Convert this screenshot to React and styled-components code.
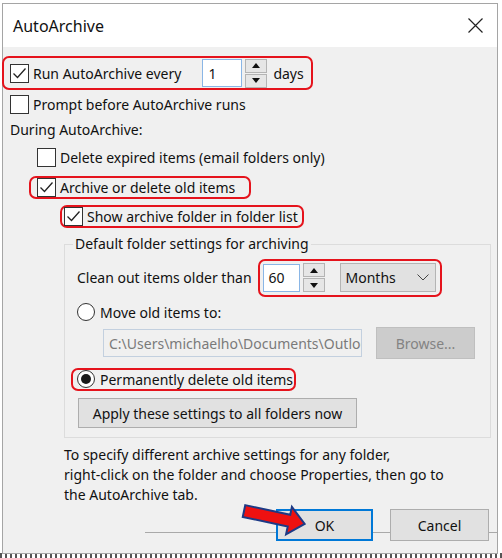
import styled, { createGlobalStyle } from "styled-components";

const GlobalStyle = createGlobalStyle`
  body {
    margin: 0;
    background: #ffffff;
    font-family: "Noto Sans", "Open Sans", sans-serif;
    font-size: 14px;
    color: #111;
  }
`;

const Page = styled.div`
  width: 502px;
  height: 558px;
  padding: 3px 0 0 2px;
  box-sizing: border-box;
  overflow: hidden;
  background: repeating-linear-gradient(90deg, #555 0 2px, #fff 2px 5px) bottom / 100% 5px no-repeat, #fff;
`;

const Window = styled.div`
  position: relative;
  width: 496px;
  height: 551px;
  box-sizing: border-box;
  border: 1px solid #a5a5a5;
  background: #f0f0f0;
  display: flex;
  flex-direction: column;
`;

const TitleBar = styled.div`
  height: 43px;
  flex: none;
  background: #fff;
  display: flex;
  align-items: center;
  justify-content: space-between;
  padding: 0 14px 0 10px;
`;

const Title = styled.span`
  font-size: 16px;
  color: #111;
`;

const Body = styled.div`
  padding: 11px 8px 0 7px;
  display: flex;
  flex-direction: column;
`;

const Row = styled.div`
  display: flex;
  align-items: center;
  height: ${(p) => p.$h || 22}px;
  margin-top: ${(p) => p.$mt || 0}px;
  margin-left: ${(p) => p.$ml || 0}px;
`;

const Highlight = styled.div`
  display: flex;
  align-items: center;
  border: 2px solid #e5131c;
  border-radius: 7px;
  padding: ${(p) => `${p.$t}px ${p.$r}px ${p.$b}px ${p.$l}px`};
  margin: ${(p) => `-${p.$t + 2}px -${p.$r + 2}px -${p.$b + 2}px -${p.$l + 2}px`};
`;

const Box = styled.span`
  width: 19px;
  height: 19px;
  box-sizing: border-box;
  flex: none;
  border: 1px solid #333;
  background: #fff;
  display: flex;
  align-items: center;
  justify-content: center;
`;

const Round = styled.span`
  width: 18px;
  height: 18px;
  box-sizing: border-box;
  flex: none;
  border: 1px solid #333;
  border-radius: 50%;
  background: #fff;
  display: flex;
  align-items: center;
  justify-content: center;

  &::after {
    content: "";
    width: 10px;
    height: 10px;
    border-radius: 50%;
    background: #1a1a1a;
    display: ${(p) => (p.$on ? "block" : "none")};
  }
`;

const Label = styled.span`
  margin-left: ${(p) => p.$gap ?? 4}px;
  white-space: nowrap;
`;

const NumField = styled.div`
  width: ${(p) => p.$w}px;
  height: 28px;
  box-sizing: border-box;
  border: 1px solid #8ab6e6;
  background: #fff;
  padding-left: 5px;
  display: flex;
  align-items: center;
  margin-left: ${(p) => p.$ml}px;
`;

const Spinner = styled.div`
  display: flex;
  flex-direction: column;
  gap: 1px;
  margin-left: 3px;
`;

const SpinBtn = styled.div`
  width: 22px;
  height: 14px;
  box-sizing: border-box;
  border: 1px solid #b4b4b4;
  background: #e6e6e6;
  display: flex;
  align-items: center;
  justify-content: center;

  &::after {
    content: "";
    border-left: 4px solid transparent;
    border-right: 4px solid transparent;
    ${(p) => (p.$up ? "border-bottom: 5px solid #111;" : "border-top: 5px solid #111;")}
  }
`;

const Combo = styled.div`
  width: 96px;
  height: 29px;
  box-sizing: border-box;
  margin-left: 15px;
  border: 1px solid #b4b4b4;
  background: #e1e1e1;
  display: flex;
  align-items: center;
  justify-content: space-between;
  padding: 0 6px 0 5px;
`;

const Group = styled.fieldset`
  margin: 7px 0 0 54px;
  width: 427px;
  box-sizing: border-box;
  border: 1px solid #dcdcdc;
  padding: 0 0 9px 12px;
  min-width: 0;
`;

const Legend = styled.legend`
  margin-left: -4px;
  padding: 0 2px;
  line-height: 20px;
`;

const PathField = styled.div`
  width: 259px;
  height: 28px;
  box-sizing: border-box;
  margin-left: 26px;
  border: 1px solid #c3d0df;
  background: #f0f0f0;
  color: #7a7a7a;
  padding-left: 5px;
  display: flex;
  align-items: center;
  white-space: nowrap;
  overflow: hidden;
`;

const Button = styled.div`
  width: ${(p) => p.$w}px;
  height: ${(p) => p.$h || 32}px;
  box-sizing: border-box;
  flex: none;
  margin-left: ${(p) => p.$ml || 0}px;
  border: ${(p) => (p.$primary ? "2px solid #0078d7" : p.$disabled ? "1px solid #bfbfbf" : "1px solid #adadad")};
  background: ${(p) => (p.$disabled ? "#cccccc" : "#e1e1e1")};
  color: ${(p) => (p.$disabled ? "#838383" : "#111")};
  display: flex;
  align-items: center;
  justify-content: center;
  white-space: nowrap;
  position: relative;
  z-index: 1;
`;

const Note = styled.p`
  margin: 7px 0 0 54px;
  line-height: 20px;
`;

const Footer = styled.div`
  position: relative;
  display: flex;
  justify-content: flex-end;
  gap: 17px;
  margin-top: 4px;

  &::before {
    content: "";
    position: absolute;
    left: 135px;
    right: -8px;
    top: 23px;
    border-top: 1px solid #a9a9a9;
  }
`;

const Arrow = styled.svg`
  position: absolute;
  left: 233px;
  top: 493px;
  z-index: 2;
  overflow: visible;
`;

function CheckBox({ checked }) {
  return (
    <Box>
      {checked && (
        <svg width="15" height="15" viewBox="0 0 15 15">
          <path d="M1.5 7.5 L5.5 11.5 L13.5 2.5" fill="none" stroke="#222" strokeWidth="1.3" />
        </svg>
      )}
    </Box>
  );
}

function Spin() {
  return (
    <Spinner>
      <SpinBtn $up />
      <SpinBtn />
    </Spinner>
  );
}

export default function App() {
  return (
    <Page>
      <GlobalStyle />
      <Window>
        <TitleBar>
          <Title>AutoArchive</Title>
          <svg width="15" height="15" viewBox="0 0 15 15">
            <path d="M0.5 0.5 L14.5 14.5 M14.5 0.5 L0.5 14.5" stroke="#222" strokeWidth="1.2" />
          </svg>
        </TitleBar>
        <Body>
          <Row $h={30}>
            <Highlight $t={1} $r={7} $b={0} $l={6}>
              <CheckBox checked />
              <Label>Run AutoArchive every</Label>
              <NumField $w={40} $ml={21}>1</NumField>
              <Spin />
              <Label $gap={6}>days</Label>
            </Highlight>
          </Row>
          <Row $mt={5}>
            <CheckBox />
            <Label>Prompt before AutoArchive runs</Label>
          </Row>
          <Row $mt={3}>
            <span>During AutoArchive:</span>
          </Row>
          <Row $mt={6} $ml={27}>
            <CheckBox />
            <Label>Delete expired items (email folders only)</Label>
          </Row>
          <Row $mt={8} $ml={27}>
            <Highlight $t={0} $r={14} $b={0} $l={6}>
              <CheckBox checked />
              <Label>Archive or delete old items</Label>
            </Highlight>
          </Row>
          <Row $mt={7} $ml={54}>
            <Highlight $t={0} $r={4} $b={0} $l={2}>
              <CheckBox checked />
              <Label>Show archive folder in folder list</Label>
            </Highlight>
          </Row>
          <Group>
            <Legend>Default folder settings for archiving</Legend>
            <Row $h={29} $mt={9}>
              <span>Clean out items older than</span>
              <Label $gap={11}>
                <Highlight $t={2} $r={4} $b={3} $l={3}>
                  <NumField $w={37} $ml={0}>60</NumField>
                  <Spin />
                  <Combo>
                    <span>Months</span>
                    <svg width="12" height="7" viewBox="0 0 12 7">
                      <path d="M0.5 0.5 L6 6 L11.5 0.5" fill="none" stroke="#444" strokeWidth="1" />
                    </svg>
                  </Combo>
                </Highlight>
              </Label>
            </Row>
            <Row $mt={9}>
              <Round />
              <Label $gap={5}>Move old items to:</Label>
            </Row>
            <Row $h={32} $mt={4}>
              <PathField>C:\Users\michaelho\Documents\Outlook</PathField>
              <Button $w={99} $ml={14} $disabled>Browse...</Button>
            </Row>
            <Row $mt={9}>
              <Highlight $t={0} $r={1} $b={0} $l={4}>
                <Round $on />
                <Label $gap={5}>Permanently delete old items</Label>
              </Highlight>
            </Row>
            <Row $h={30} $mt={8}>
              <Button $w={279} $h={30} $ml={1}>Apply these settings to all folders now</Button>
            </Row>
          </Group>
          <Note>
            To specify different archive settings for any folder,
            <br />
            right-click on the folder and choose Properties, then go to
            <br />
            the AutoArchive tab.
          </Note>
          <Footer>
            <Button $w={97} $primary>OK</Button>
            <Button $w={99}>Cancel</Button>
          </Footer>
        </Body>
        <Arrow width="76" height="44" viewBox="0 0 76 44">
          <g transform="translate(8 14) rotate(12)">
            <polygon
              points="0,-6 46,-6 46,-14 62,0 46,14 46,6 0,6"
              fill="#ee1111"
              stroke="#1d3a86"
              strokeWidth="2"
              strokeLinejoin="miter"
            />
          </g>
        </Arrow>
      </Window>
    </Page>
  );
}
